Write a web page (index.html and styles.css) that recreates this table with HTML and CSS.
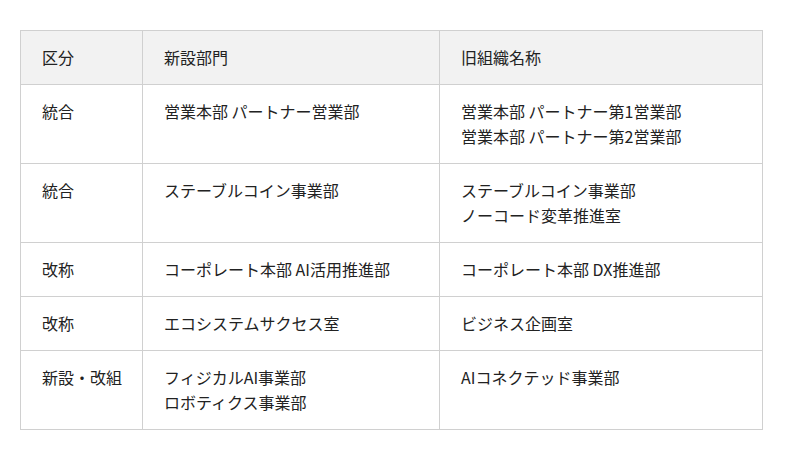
FILE: index.html
```html
<!DOCTYPE html>
<html lang="ja">
<head>
<meta charset="utf-8">
<link rel="stylesheet" href="styles.css">
</head>
<body>
<div class="wrap">
<table class="org">
  <colgroup>
    <col class="c1"><col class="c2"><col class="c3">
  </colgroup>
  <thead>
    <tr><th>区分</th><th>新設部門</th><th>旧組織名称</th></tr>
  </thead>
  <tbody>
    <tr><td>統合</td><td>営業本部 パートナー営業部</td><td>営業本部 パートナー第1営業部<br>営業本部 パートナー第2営業部</td></tr>
    <tr><td>統合</td><td>ステーブルコイン事業部</td><td>ステーブルコイン事業部<br>ノーコード変革推進室</td></tr>
    <tr><td>改称</td><td>コーポレート本部 AI活用推進部</td><td>コーポレート本部 DX推進部</td></tr>
    <tr><td>改称</td><td>エコシステムサクセス室</td><td>ビジネス企画室</td></tr>
    <tr><td>新設・改組</td><td>フィジカルAI事業部<br>ロボティクス事業部</td><td>AIコネクテッド事業部</td></tr>
  </tbody>
</table>
</div>
</body>
</html>
```

FILE: styles.css
```css
html, body {
  margin: 0;
  background: #fff;
}
.wrap {
  padding: 30px 38px 0 20px;
}
.org {
  width: 742px;
  border-collapse: collapse;
  font-family: "Noto Sans CJK JP", "Noto Sans", sans-serif;
  font-size: 16px;
  line-height: 25px;
  color: #222;
  table-layout: fixed;
}
.c1 { width: 122px; }
.c2 { width: 297px; }
.c3 { width: 323px; }
.org th, .org td {
  border: 1px solid #d0d0d0;
  padding: 14px 21px;
  text-align: left;
  vertical-align: top;
  font-weight: normal;
  white-space: nowrap;
}
.org th {
  background: #f2f2f2;
}
```
